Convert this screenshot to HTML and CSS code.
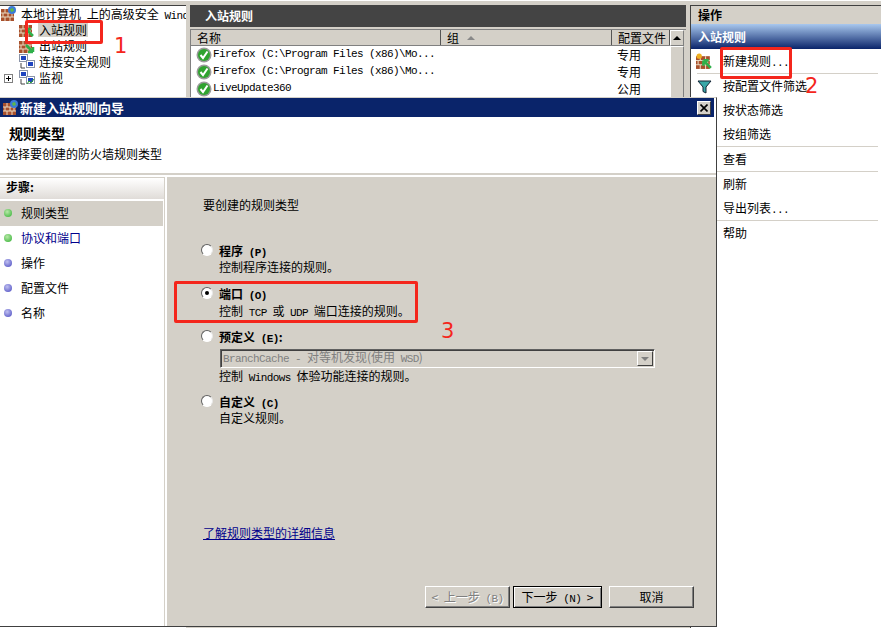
FILE: index.html
```html
<!DOCTYPE html>
<html lang="zh-CN">
<head>
  <meta charset="UTF-8" />
  <title>新建入站规则向导</title>
  <link rel="stylesheet" href="styles.css">
</head>
<body>
  <svg class="defs" width="0" height="0">
    <symbol id="brick" viewBox="0 0 16 16">
      <rect x="0" y="3" width="13" height="12" fill="#a8502c"/>
      <path d="M0 7h13M0 11h13M4 3v4M9 3v4M2 7v4M7 7v4M11 7v4M4 11v4M9 11v4" stroke="#e8d8c0" stroke-width="1" fill="none"/>
    </symbol>
    <symbol id="check" viewBox="0 0 16 16">
      <circle cx="8" cy="8" r="7.5" fill="#9a9a9a"/>
      <circle cx="8" cy="8" r="6" fill="#2fa32f"/>
      <path d="M4.5 8l2.5 3 4.5-6.5" stroke="#fff" stroke-width="2" fill="none"/>
    </symbol>
    <symbol id="nodes" viewBox="0 0 16 16">
      <rect x="0.5" y="0.5" width="8" height="7" fill="#fff" stroke="#8a94a8"/>
      <rect x="2" y="2" width="5" height="4" fill="#1f45c0"/>
      <rect x="7.5" y="6.5" width="8" height="7" fill="#fff" stroke="#8a94a8"/>
      <rect x="9" y="8" width="5" height="4" fill="#1f45c0"/>
      <path d="M2 9v5h4" stroke="#444" fill="none"/>
    </symbol>
  </svg>

  <div class="console">
    <div class="tree">
      <div class="tree-row">
        <svg class="ico globe" width="16" height="16" viewBox="0 0 16 16"><use href="#brick"/><circle cx="11" cy="4" r="4" fill="#3a7ad8"/><path d="M9 3l3-1 1 3-3 1z" fill="#5cb848"/></svg>
        <span>本地计算机 上的高级安全 <i class="mono">Wind</i></span>
      </div>
      <div class="tree-row lvl1">
        <svg class="ico" width="16" height="16" viewBox="0 0 16 16"><use href="#brick"/><path d="M14 14L7 7M7 7v5M7 7h5" stroke="#2fb04a" stroke-width="2.5" fill="none"/></svg>
        <span class="picked">入站规则</span>
      </div>
      <div class="tree-row lvl1">
        <svg class="ico" width="16" height="16" viewBox="0 0 16 16"><use href="#brick"/><path d="M7 7l7 7M14 14V9M14 14H9" stroke="#2fb04a" stroke-width="2.5" fill="none"/></svg>
        <span>出站规则</span>
      </div>
      <div class="tree-row lvl1">
        <svg class="ico" width="16" height="16"><use href="#nodes"/></svg>
        <span>连接安全规则</span>
      </div>
      <div class="tree-row lvl1 has-plus">
        <span class="plus"></span>
        <svg class="ico" width="16" height="16" viewBox="0 0 16 16"><use href="#nodes"/><path d="M8 14l2-3 2 2 3-4" stroke="#2fa32f" fill="none"/></svg>
        <span>监视</span>
      </div>
    </div>

    <div class="center">
      <div class="center-head">入站规则</div>
      <div class="list">
        <div class="list-main">
          <div class="list-cols">
            <div class="col col-name">名称</div>
            <div class="col col-group">组<span class="sort"></span></div>
            <div class="col col-profile">配置文件</div>
          </div>
          <div class="list-row">
            <div class="cell-name"><svg width="16" height="16"><use href="#check"/></svg><span class="mono">Firefox (C:\Program Files (x86)\Mo...</span></div>
            <div class="cell-group"></div>
            <div class="cell-profile">专用</div>
          </div>
          <div class="list-row">
            <div class="cell-name"><svg width="16" height="16"><use href="#check"/></svg><span class="mono">Firefox (C:\Program Files (x86)\Mo...</span></div>
            <div class="cell-group"></div>
            <div class="cell-profile">专用</div>
          </div>
          <div class="list-row">
            <div class="cell-name"><svg width="16" height="16"><use href="#check"/></svg><span class="mono">LiveUpdate360</span></div>
            <div class="cell-group"></div>
            <div class="cell-profile">公用</div>
          </div>
        </div>
        <div class="scrollbar">
          <div class="scroll-btn"><span class="arrow-up"></span></div>
          <div class="scroll-thumb"></div>
        </div>
      </div>
    </div>

    <div class="actions">
      <div class="actions-title">操作</div>
      <div class="actions-band">入站规则</div>
      <div class="action">
        <svg class="action-ico" width="17" height="17" viewBox="0 0 16 16"><use href="#brick"/><path d="M14 14L7 7M7 7v5M7 7h5" stroke="#2fb04a" stroke-width="2.5" fill="none"/><circle cx="3" cy="3" r="2.5" fill="#f0b020"/></svg>
        <span>新建规则<i class="mono">...</i></span>
      </div>
      <div class="action-sep"></div>
      <div class="action">
        <svg class="action-ico funnel" width="15" height="14" viewBox="0 0 15 14"><path d="M1 1h13L9 7v6l-3-1.500V7z" fill="#38a8a8" stroke="#123"/></svg>
        <span>按配置文件筛选</span>
      </div>
      <div class="action">按状态筛选</div>
      <div class="action">按组筛选</div>
      <div class="action-sep"></div>
      <div class="action">查看</div>
      <div class="action-sep"></div>
      <div class="action">刷新</div>
      <div class="action">导出列表<i class="mono">...</i></div>
      <div class="action-sep"></div>
      <div class="action">帮助</div>
    </div>
  </div>

  <div class="wizard">
    <div class="titlebar">
      <svg width="16" height="16" viewBox="0 0 16 16"><use href="#brick"/><circle cx="11" cy="4" r="4" fill="#3a7ad8"/><path d="M9 3l3-1 1 3-3 1z" fill="#5cb848"/></svg>
      <span class="titlebar-text">新建入站规则向导</span>
      <span class="close-btn"><svg width="8" height="8" viewBox="0 0 8 8"><path d="M0.500 0.500l7 7M7.500 0.500l-7 7" stroke="#000" stroke-width="1.600"/></svg></span>
    </div>
    <div class="wizard-head">
      <h1>规则类型</h1>
      <p>选择要创建的防火墙规则类型</p>
    </div>
    <div class="wizard-body">
      <div class="steps">
        <div class="steps-title">步骤:</div>
        <div class="step now"><span class="dot green"></span>规则类型</div>
        <div class="step link-step"><span class="dot green"></span>协议和端口</div>
        <div class="step"><span class="dot blue"></span>操作</div>
        <div class="step"><span class="dot blue"></span>配置文件</div>
        <div class="step"><span class="dot blue"></span>名称</div>
      </div>
      <div class="content">
        <div class="question">要创建的规则类型</div>
        <div class="opt opt-first">
          <span class="radio"></span>
          <div><div class="opt-name">程序 <b class="mono">(P)</b></div><div class="opt-desc">控制程序连接的规则。</div></div>
        </div>
        <div class="opt opt-port">
          <span class="radio on"></span>
          <div><div class="opt-name">端口 <b class="mono">(O)</b></div><div class="opt-desc">控制 <i class="mono">TCP</i> 或 <i class="mono">UDP</i> 端口连接的规则。</div></div>
        </div>
        <div class="opt opt-pre">
          <span class="radio"></span>
          <div class="opt-wide">
            <div class="opt-name">预定义 <b class="mono">(E)</b>:</div>
            <div class="combo"><span><i class="mono">BranchCache - </i>对等机发现(使用 <i class="mono">WSD</i>)</span><span class="combo-btn"><span class="arrow-down"></span></span></div>
            <div class="opt-desc">控制 <i class="mono">Windows</i> 体验功能连接的规则。</div>
          </div>
        </div>
        <div class="opt opt-custom">
          <span class="radio"></span>
          <div><div class="opt-name">自定义 <b class="mono">(C)</b></div><div class="opt-desc">自定义规则。</div></div>
        </div>
        <a class="more" href="#">了解规则类型的详细信息</a>
        <div class="buttons">
          <div class="btn off">&lt; 上一步 <i class="mono">(B)</i></div>
          <div class="btn main">下一步 <i class="mono">(N)</i> &gt;</div>
          <div class="btn">取消</div>
        </div>
      </div>
    </div>
  </div>

  <!-- red marks drawn on the screenshot -->
  <div class="mark mark-1"></div>
  <div class="mark mark-2"></div>
  <div class="mark mark-3"></div>
  <span class="num num-1">1</span>
  <span class="num num-2">2</span>
  <span class="num num-3">3</span>
</body>
</html>
```

FILE: styles.css
```css
* {
  box-sizing: border-box;
}
body {
  margin: 0;
  width: 881px;
  height: 628px;
  overflow: hidden;
  position: relative;
  background: #fff;
  font-family: "Noto Sans CJK SC", "Liberation Sans", sans-serif;
  font-size: 12px;
  line-height: 16px;
  word-spacing: 3px;
  color: #000;
}
.defs {
  position: absolute;
}
.mono {
  font-family: "Liberation Mono", monospace;
  font-size: 11px;
  letter-spacing: -0.6px;
  word-spacing: 0;
  font-style: normal;
  line-height: 1;
}

.console {
  display: flex;
  gap: 4px;
  height: 628px;
  padding-top: 4px;
  background: #d4d0c8;
  border-top: 1px solid #fff;
}
.tree {
  width: 186px;
  background: #fff;
  border-top: 1px solid #404040;
}
.tree-row {
  height: 16px;
  display: flex;
  align-items: center;
  gap: 4px;
  white-space: nowrap;
  overflow: hidden;
}
.tree-row .ico {
  flex: none;
  margin-left: 1px;
}
.lvl1 {
  padding-left: 18px;
}
.has-plus {
  padding-left: 4px;
}
.plus {
  width: 9px;
  height: 9px;
  border: 1px solid #808080;
  margin-right: 1px;
  flex: none;
  background: linear-gradient(#000, #000) center / 5px 1px no-repeat, linear-gradient(#000, #000) center / 1px 5px no-repeat;
}
.picked {
  background: #d4d0c8;
  padding: 0 1px;
  margin-left: -1px;
  line-height: 14px;
}

.center {
  width: 496px;
}
.center-head {
  height: 22px;
  background: #444;
  color: #fff;
  font-weight: 700;
  padding: 3px 15px;
  margin-bottom: 2px;
}
.list {
  display: flex;
  height: 69px;
  background: #fff;
  border: 1px solid #808080;
  border-bottom: 0;
  border-right: 0;
}
.list-main {
  flex: 1;
}
.list-cols {
  display: flex;
  height: 16px;
  background: #d4d0c8;
  border-bottom: 1px solid #808080;
  line-height: 15px;
}
.col {
  border-right: 1px solid #555;
  padding-left: 6px;
}
.col-name {
  width: 250px;
}
.col-group {
  width: 171px;
  display: flex;
  align-items: center;
}
.sort {
  margin-left: 8px;
  border-left: 4px solid transparent;
  border-right: 4px solid transparent;
  border-bottom: 4px solid #888;
}
.col-profile {
  flex: 1;
}
.scrollbar {
  width: 16px;
  background: #d4d0c8;
  padding-right: 2px;
}
.scroll-btn {
  height: 16px;
  display: flex;
  align-items: center;
  justify-content: center;
  border: 1px solid;
  border-color: #fff #808080 #808080 #fff;
}
.arrow-up {
  border-left: 4px solid transparent;
  border-right: 4px solid transparent;
  border-bottom: 4px solid #000;
}
.scroll-thumb {
  height: 53px;
  border: 1px solid;
  border-color: #fff #808080 #808080 #fff;
}
.list-row {
  display: flex;
  height: 17px;
  align-items: center;
}
.cell-name {
  width: 250px;
  display: flex;
  align-items: center;
  gap: 1px;
  padding-left: 5px;
  white-space: nowrap;
}
.cell-group {
  width: 171px;
}
.cell-profile {
  padding-left: 5px;
}

.actions {
  width: 191px;
  background: #fff;
  border-left: 1px solid #404040;
  border-top: 1px solid #404040;
}
.actions-title {
  height: 18px;
  background: #d4d0c8;
  font-weight: 700;
  padding-left: 7px;
  line-height: 18px;
}
.actions-band {
  height: 25px;
  background: linear-gradient(#a9c8ee, #0a246a);
  color: #fff;
  font-weight: 700;
  padding: 5px 7px;
}
.action {
  height: 24px;
  padding-left: 32px;
  line-height: 24px;
  position: relative;
  white-space: nowrap;
}
.action-ico {
  position: absolute;
  left: 5px;
  top: 4px;
}
.action-ico.funnel {
  left: 6px;
  top: 6px;
}
.action-sep {
  height: 1px;
  margin: 0 3px 0 6px;
  background: #d4d0c8;
}

.wizard {
  position: absolute;
  left: 0;
  top: 97px;
  width: 717px;
  height: 530px;
  background: #fff;
  border-right: 1px solid #404040;
  border-bottom: 1px solid #404040;
  border-top: 1px solid #d4d0c8;
}
.titlebar {
  height: 19px;
  margin-right: 2px;
  background: #0a246a;
  color: #fff;
  display: flex;
  align-items: center;
  gap: 1px;
  padding: 0 3px;
}
.titlebar-text {
  flex: 1;
  font-size: 13px;
  font-weight: 700;
}
.close-btn {
  width: 14px;
  height: 14px;
  background: #d4d0c8;
  display: flex;
  align-items: center;
  justify-content: center;
  border: 1px solid;
  border-color: #fff #404040 #404040 #fff;
}
.wizard-head {
  height: 56px;
  padding: 7px 6px 0;
}
.wizard-head h1 {
  margin: 0 0 4px 3px;
  font-size: 14px;
  line-height: 18px;
}
.wizard-head p {
  margin: 0;
}
.wizard-body {
  display: flex;
  height: 453px;
  border-top: 2px solid #d4d0c8;
  padding-top: 2px;
}
.steps {
  width: 165px;
  border-right: 1px solid #d4d0c8;
  border-top: 1px solid #d4d0c8;
}
.steps-title {
  height: 21px;
  padding: 1px 6px;
  font-weight: 700;
  background: linear-gradient(#fff, #e0dcd8);
  margin-bottom: 2px;
}
.step {
  height: 25px;
  display: flex;
  align-items: center;
  gap: 9px;
  padding: 0 0 2px 4px;
}
.step.now {
  background: #d4d0c8;
  margin-right: 1px;
}
.link-step {
  color: #00008b;
}
.dot {
  width: 8px;
  height: 8px;
  border-radius: 50%;
}
.dot.green {
  background: radial-gradient(circle at 40% 35%, #b8e8a8, #2fb030);
}
.dot.blue {
  background: radial-gradient(circle at 40% 35%, #c0c0f0, #4848c0);
}
.content {
  flex: 1;
  background: #d4d0c8;
  margin-left: 2px;
  padding: 20px 0 0 34px;
}
.question {
  height: 16px;
  margin-left: 2px;
  margin-bottom: 30px;
}
.opt {
  display: flex;
  gap: 6px;
}
.opt-first {
  margin-bottom: 11px;
}
.opt-port {
  margin-bottom: 10px;
}
.opt-pre {
  margin-bottom: 10px;
}
.opt-wide {
  flex: none;
}
.radio {
  width: 12px;
  height: 12px;
  margin-top: 1px;
  border-radius: 50%;
  background: #fff;
  border: 1px solid;
  border-color: #606060 #e8e8e8 #fff #606060;
  flex: none;
  display: flex;
  align-items: center;
  justify-content: center;
}
.radio.on::after {
  content: "";
  width: 4px;
  height: 4px;
  border-radius: 50%;
  background: #000;
}
.opt-name {
  height: 16px;
  font-weight: 700;
}
.opt-desc {
  height: 16px;
}
.opt-port .opt-desc {
  margin-top: 1px;
}
.combo {
  width: 435px;
  height: 19px;
  margin: 4px 0 0 1px;
  color: #808080;
  display: flex;
  align-items: center;
  justify-content: space-between;
  border: 1px solid;
  border-color: #606060 #fff #fff #606060;
  box-shadow: inset 1px 1px 0 #404040;
  padding: 0 0 3px 2px;
}
.combo-btn {
  width: 16px;
  height: 15px;
  margin: 3px 1px 0 0;
  display: flex;
  align-items: center;
  justify-content: center;
  border: 1px solid;
  border-color: #fff #404040 #404040 #fff;
}
.arrow-down {
  border-left: 4px solid transparent;
  border-right: 4px solid transparent;
  border-top: 4px solid #808080;
}
.more {
  display: block;
  height: 16px;
  width: max-content;
  margin: 99px 0 0 2px;
  color: #00008b;
}
.buttons {
  display: flex;
  margin: 45px 0 0 224px;
  gap: 3px;
}
.btn {
  width: 85px;
  height: 22px;
  line-height: 20px;
  text-align: center;
  border: 1px solid;
  border-color: #fff #404040 #404040 #fff;
  box-shadow: inset -1px -1px 0 #808080;
}
.btn.off {
  color: #808080;
  text-shadow: 1px 1px 0 #fff;
}
.btn.main {
  width: 89px;
  margin-right: 4px;
  border-color: #000;
  box-shadow: inset 1px 1px 0 #fff, inset -1px -1px 0 #808080;
}

.mark {
  position: absolute;
  border: 3px solid #f4261c;
  border-radius: 2px;
}
.mark-1 {
  left: 25px;
  top: 20px;
  width: 78px;
  height: 24px;
}
.mark-2 {
  left: 720px;
  top: 47px;
  width: 72px;
  height: 32px;
}
.mark-3 {
  left: 174px;
  top: 281px;
  width: 244px;
  height: 42px;
}
.num {
  position: absolute;
  color: #f4261c;
  font-family: "DejaVu Sans", sans-serif;
  font-size: 21px;
  line-height: 21px;
}
.num-1 {
  left: 114px;
  top: 36px;
}
.num-2 {
  left: 805px;
  top: 76px;
}
.num-3 {
  left: 441px;
  top: 321px;
}
```
